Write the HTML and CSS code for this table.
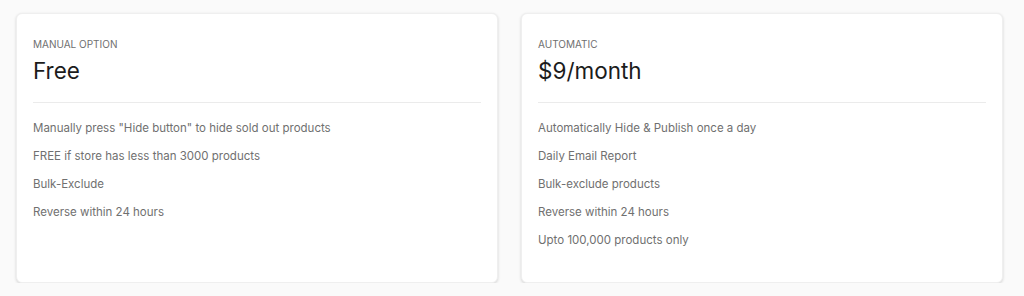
FILE: index.html
```html
<!DOCTYPE html>
<html>
<head>
<meta charset="utf-8">
<link rel="stylesheet" href="styles.css">
</head>
<body>
<div class="plans">
  <section class="card">
    <div class="label">MANUAL OPTION</div>
    <div class="price">Free</div>
    <hr class="divider">
    <ul class="features">
      <li>Manually press "Hide button" to hide sold out products</li>
      <li>FREE if store has less than 3000 products</li>
      <li>Bulk-Exclude</li>
      <li>Reverse within 24 hours</li>
    </ul>
  </section>
  <section class="card">
    <div class="label">AUTOMATIC</div>
    <div class="price">$9/month</div>
    <hr class="divider">
    <ul class="features">
      <li>Automatically Hide &amp; Publish once a day</li>
      <li>Daily Email Report</li>
      <li>Bulk-exclude products</li>
      <li>Reverse within 24 hours</li>
      <li>Upto 100,000 products only</li>
    </ul>
  </section>
</div>
</body>
</html>
```

FILE: styles.css
```css
html, body {
  margin: 0;
  padding: 0;
  background: #fafafa;
  font-family: Inter, "Noto Sans", sans-serif;
}

.plans {
  display: grid;
  grid-template-columns: 482px 482px;
  gap: 23px;
  padding: 13px 21px 0 16px;
}

.card {
  background: #ffffff;
  border: 1px solid #efefef;
  border-radius: 6px;
  box-shadow: 0 1px 3px rgba(0, 0, 0, 0.16);
  padding: 22px 16px 32px 16px;
  display: flex;
  flex-direction: column;
}

.label {
  font-size: 10px;
  line-height: 16px;
  color: #6f6f6f;
}

.price {
  margin-top: 5px;
  font-size: 22.5px;
  line-height: 28px;
  color: #1c1c1c;
}

.divider {
  margin: 17px 0 0 0;
  border: 0;
  border-top: 1px solid #ebebeb;
  height: 0;
}

.features {
  list-style: none;
  margin: 15px 0 0 0;
  padding: 0;
  display: flex;
  flex-direction: column;
  gap: 8px;
}

.features li {
  font-size: 11.5px;
  line-height: 20px;
  color: #707070;
}
```
